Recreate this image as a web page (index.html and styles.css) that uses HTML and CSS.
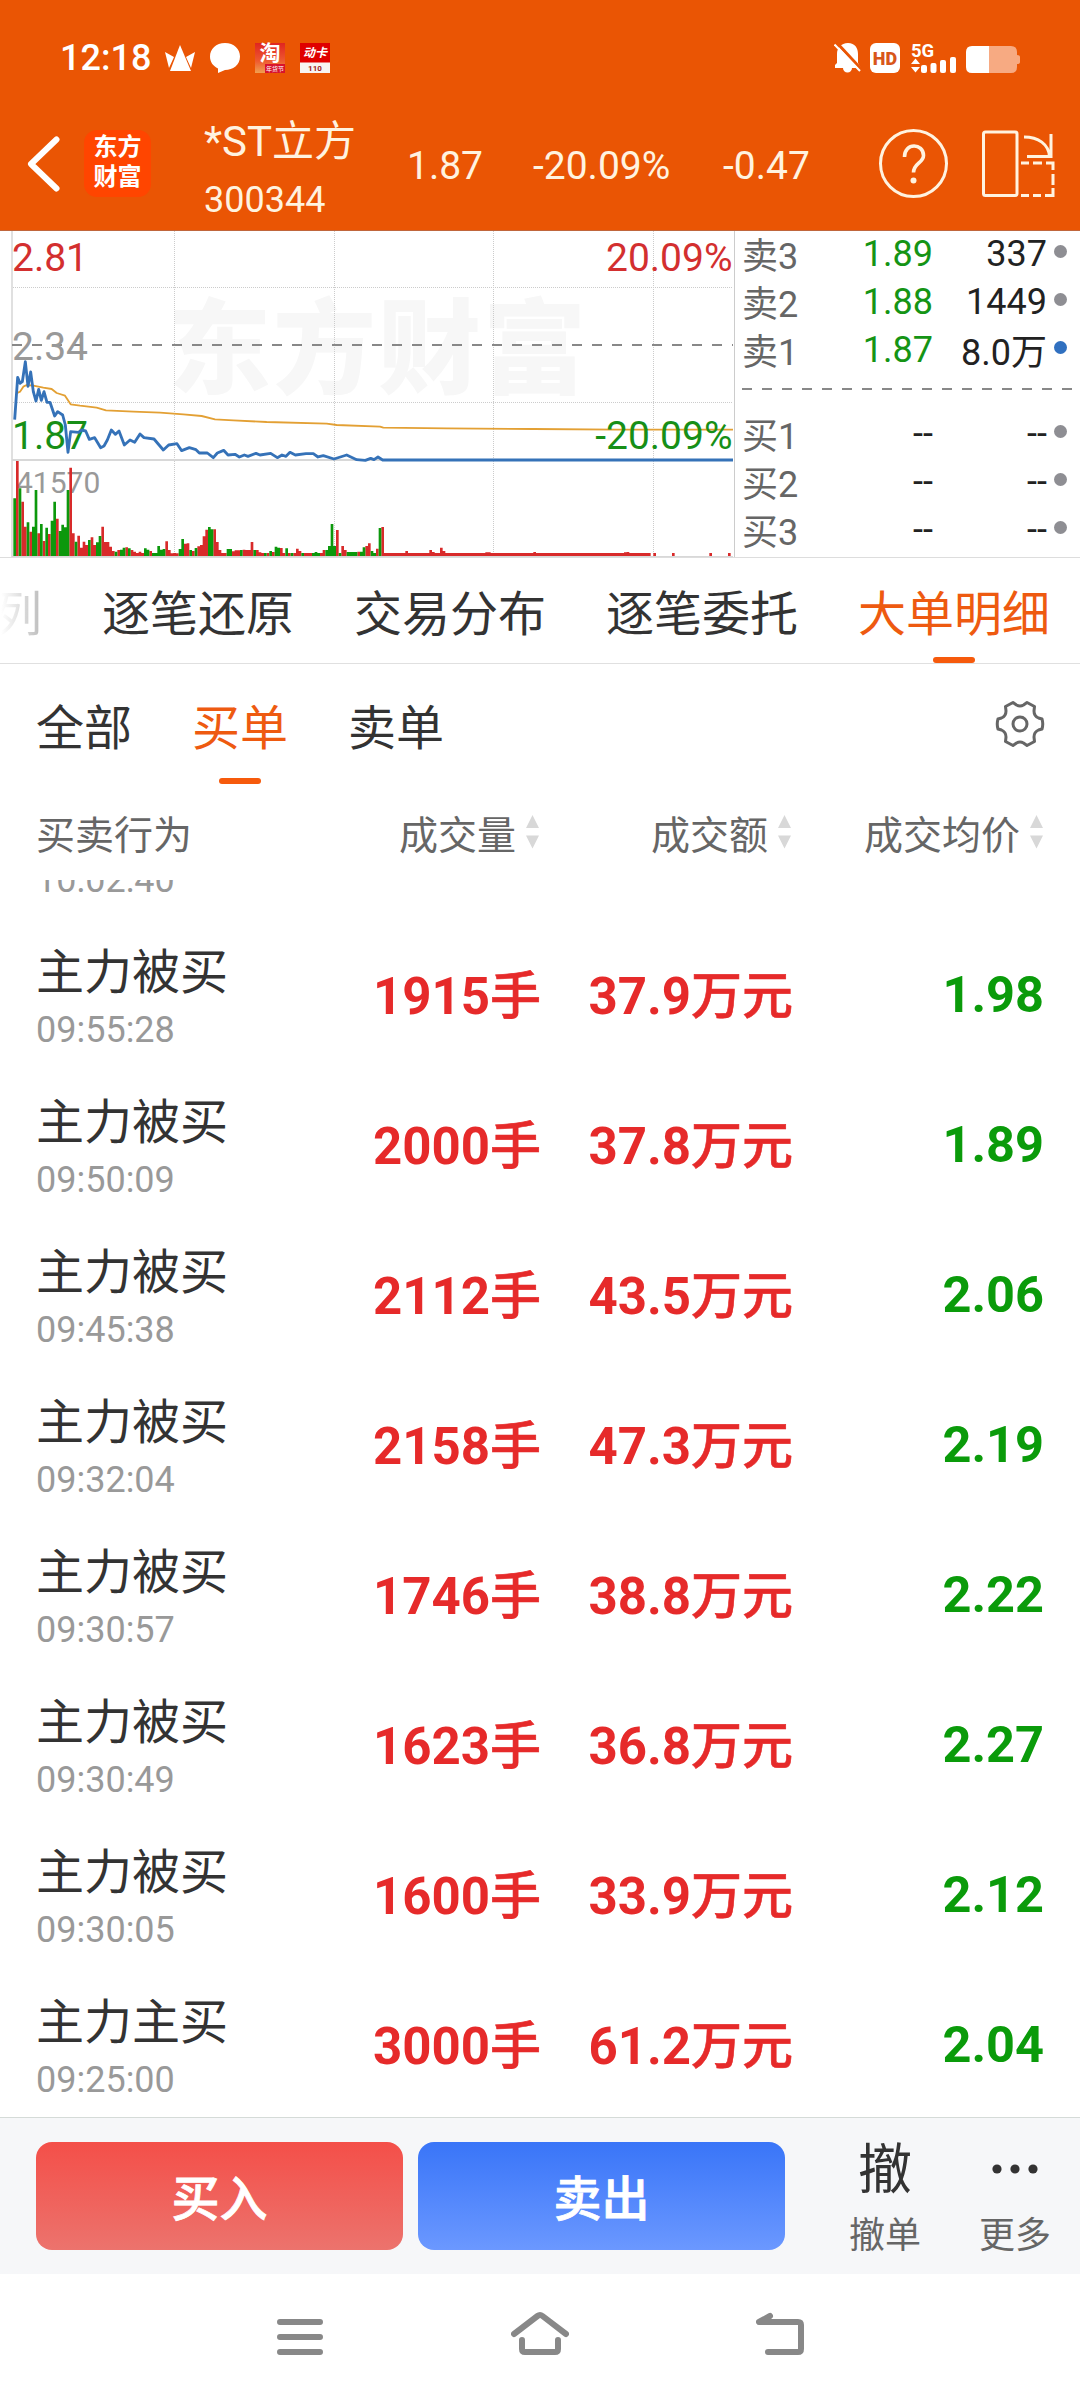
FILE: index.html
```html
<!DOCTYPE html>
<html lang="zh-CN">
<head>
<meta charset="utf-8">
<title>*ST立方 300344</title>
<link rel="stylesheet" href="styles.css">
</head>
<body>
<header class="top">
  <div class="status">
    <div class="status-left">
      <span class="clock">12:18</span>
      <svg width="30" height="30" viewBox="0 0 30 30" fill="#fff"><path d="M15 2 26 28H5Z"/><path d="M0 9 9 14 4 25ZM30 9 21 14 26 25Z"/></svg>
      <svg width="30" height="30" viewBox="0 0 30 30" fill="#fff"><path d="M15 0C24 0 30 6 30 13.500C30 22 23 27 15 27L8 30V25.500C3 23 0 19 0 13.500C0 6 6 0 15 0Z"/></svg>
      <span class="app app-tao"><b>淘</b><i>年货节</i></span>
      <span class="app app-card"><b>动卡</b><i>110</i></span>
    </div>
    <div class="status-right">
      <svg width="28" height="30" viewBox="0 0 28 30"><path d="M14 0C21 0 24 5 24 11V20L27 25H18A4.500 4.500 0 0 1 9 25H1V22L3 20V11C3 5 7 0 14 0Z" fill="#fff"/><path d="M3 0 28 27" stroke="#ea5504" stroke-width="3"/><path d="M.5 1.500 26 28" stroke="#fff" stroke-width="2"/></svg>
      <span class="hd">HD</span>
      <svg class="signal" width="46" height="30" viewBox="0 0 46 30" fill="#fff"><text x="0" y="14" class="net">5G</text><path d="M0 21 4.500 15.500 9 21ZM0 24H9L4.500 29.500Z"/><rect x="10" y="22" width="6" height="8" rx="2"/><rect x="19.500" y="20" width="6" height="10" rx="2"/><rect x="29" y="17" width="6" height="13" rx="2"/><rect x="39" y="14" width="6" height="16" rx="2"/></svg>
      <svg width="54" height="30" viewBox="0 0 54 30"><path d="M23 3H45Q51 3 51 9V12Q54 12 54 14V19Q54 21 51 21V24Q51 30 45 30H23Z" fill="#f7aa82"/><path d="M6 3H23V30H6Q0 30 0 24V9Q0 3 6 3Z" fill="#fff"/></svg>
    </div>
  </div>
  <div class="quote">
    <svg class="back" width="33" height="56" viewBox="0 0 33 56"><path d="M29.500 3.500 4 28 29.500 52.500" fill="none" stroke="#fff" stroke-width="6" stroke-linecap="round" stroke-linejoin="round"/></svg>
    <div class="logo">东方<br>财富</div>
    <div class="stock"><div class="stock-name">*ST立方</div><div class="stock-code">300344</div></div>
    <span class="num">1.87</span><span class="num">-20.09%</span><span class="num">-0.47</span>
    <svg width="70" height="70" viewBox="0 0 70 70"><circle cx="34.500" cy="34.500" r="33" fill="none" stroke="#fff3e0" stroke-width="3"/><path d="M25.500 28C25.500 13 44.500 14 44.500 26.500C44.500 34 34.500 34 34.500 43.500" fill="none" stroke="#fff3e0" stroke-width="3.600"/><circle cx="34.500" cy="51.500" r="3" fill="#fff3e0"/></svg>
    <svg width="73" height="68" viewBox="0 0 73 68" fill="none" stroke="#fff3e0" stroke-width="3"><rect x="1.500" y="2" width="33.500" height="63.500" rx="2"/><path d="M42 7C56 7 67 14 67.500 27M69 4V26.500H45"/><path d="M39 33H47M51 33H60M64 33H71V40M71 44V55M71 58V65.500H63M59 65.500H51M47 65.500H39"/></svg>
  </div>
</header>

<section class="market">
  <svg class="chart" width="736" height="327" viewBox="0 0 736 327">
    <text x="168" y="155" class="watermark">东方财富</text>
    <g stroke="#ccc" stroke-width="1" stroke-dasharray="1 1"><path d="M174.500 0V326M334.500 0V326M493.500 0V326M653.500 0V326M13 56.500H733M13 171.500H733"/></g>
    <path d="M12 0V326" stroke="#e0e0e0" stroke-width="2"/>
    <path d="M12 229H733" stroke="#d8d8d8" stroke-width="2"/>
    <path d="M12 325.500H733" stroke="#d8d8d8"/>
    <path d="M12 114H733" stroke="#888" stroke-width="2" stroke-dasharray="10 10"/>
    <path d="M734.500 0V326" stroke="#ccc"/>
    <text x="12" y="128.500" class="lbl flat">2.34</text>
    <text x="12" y="40" class="lbl up">2.81</text>
    <text x="732.500" y="40" class="lbl up end">20.09%</text>
    <text x="16" y="261.500" class="lbl flat small">41570</text>
    <g transform="translate(0 -6) scale(.33333)" fill="none" stroke-linejoin="round">
      <g id="bars"></g>
      <path stroke="#e3a034" stroke-width="5.500" d="M52 504 60 500 70 485 80 480 100 482 130 488 155 492 170 504 195 512 212 538 240 542 290 548 318 556 400 560 480 563 550 568 605 573 645 583 700 586 800 591 980 596 1010 600 1140 605 1150 608 1340 610 1600 612 1850 614 2199 614"/>
    </g>
    <text x="12" y="218" class="lbl down">1.87</text>
    <text x="732.500" y="218" class="lbl down end">-20.09%</text>
    <path transform="translate(0 -6) scale(.33333)" fill="none" stroke="#3572b8" stroke-width="8.500" stroke-linejoin="round" d="M44 584 53 457 60 475 67 470 76 410 84 484 92 441 100 500 108 528 116 493 124 526 132 500 141 532 150 532 164 573 173 560 188 570 196 600 204 682 212 620 236 622 244 615 257 618 268 643 284 638 302 668 312 663 322 645 334 615 346 628 357 618 373 660 390 645 404 652 420 627 432 638 462 642 490 675 506 660 531 656 545 677 568 668 588 674 598 684 622 684 640 698 652 684 671 676 684 690 705 688 718 696 733 690 744 694 768 685 780 690 812 685 832 698 846 690 858 694 870 682 886 690 918 686 940 686 954 696 970 692 1002 702 1040 690 1070 704 1096 706 1112 700 1122 704 1134 696 1148 705 2199 705"/>
  </svg>
  <div class="book">
    <div class="level"><span class="side">卖3</span><span class="price down">1.89</span><span class="vol">337</span><i class="dot"></i></div>
    <div class="level"><span class="side">卖2</span><span class="price down">1.88</span><span class="vol">1449</span><i class="dot"></i></div>
    <div class="level"><span class="side">卖1</span><span class="price down">1.87</span><span class="vol vol-cjk">8.0万</span><i class="dot dot-blue"></i></div>
    <div class="split"></div>
    <div class="level"><span class="side">买1</span><span class="price">--</span><span class="vol">--</span><i class="dot"></i></div>
    <div class="level"><span class="side">买2</span><span class="price">--</span><span class="vol">--</span><i class="dot"></i></div>
    <div class="level"><span class="side">买3</span><span class="price">--</span><span class="vol">--</span><i class="dot"></i></div>
  </div>
</section>

<nav class="tabs">
  <span class="tab faded">列</span><span class="tab">逐笔还原</span><span class="tab">交易分布</span><span class="tab">逐笔委托</span><span class="tab active">大单明细</span>
</nav>
<div class="filters">
  <span class="filter">全部</span><span class="filter active">买单</span><span class="filter">卖单</span>
  <svg class="gear" width="50" height="48" viewBox="0 0 50 48" fill="none" stroke="#666" stroke-width="3" stroke-linejoin="round"><path d="M18 2.500 21.500 5Q25 7 28.500 5L32 2.500 39.500 6.500 39 11Q39 16 43.500 18L47 19Q48.500 24 47 29L43.500 30Q39 32 39 37L39.500 41.500 32 45.500 28.500 43Q25 41 21.500 43L18 45.500 10.500 41.500 11 37Q11 32 6.500 30L3 29Q1.500 24 3 19L6.500 18Q11 16 11 11L10.500 6.500Z"/><circle cx="25" cy="24" r="7"/></svg>
</div>
<div class="cols head">
  <span>买卖行为</span>
  <span class="sort">成交量<svg width="13" height="34" viewBox="0 0 13 34"><path d="M6.500 0 13 13H0ZM0 20.500H13L6.500 33.500Z"/></svg></span>
  <span class="sort">成交额<svg width="13" height="34" viewBox="0 0 13 34"><path d="M6.500 0 13 13H0ZM0 20.500H13L6.500 33.500Z"/></svg></span>
  <span class="sort">成交均价<svg width="13" height="34" viewBox="0 0 13 34"><path d="M6.500 0 13 13H0ZM0 20.500H13L6.500 33.500Z"/></svg></span>
</div>
<main class="list">
  <div class="cols row first"><div class="act"><span class="time">10:02:40</span></div></div>
  <div class="cols row"><div class="act">主力被买<span class="time">09:55:28</span></div><b class="big">1915<em>手</em></b><b class="big">37.9<em>万元</em></b><b class="avg">1.98</b></div>
  <div class="cols row"><div class="act">主力被买<span class="time">09:50:09</span></div><b class="big">2000<em>手</em></b><b class="big">37.8<em>万元</em></b><b class="avg">1.89</b></div>
  <div class="cols row"><div class="act">主力被买<span class="time">09:45:38</span></div><b class="big">2112<em>手</em></b><b class="big">43.5<em>万元</em></b><b class="avg">2.06</b></div>
  <div class="cols row"><div class="act">主力被买<span class="time">09:32:04</span></div><b class="big">2158<em>手</em></b><b class="big">47.3<em>万元</em></b><b class="avg">2.19</b></div>
  <div class="cols row"><div class="act">主力被买<span class="time">09:30:57</span></div><b class="big">1746<em>手</em></b><b class="big">38.8<em>万元</em></b><b class="avg">2.22</b></div>
  <div class="cols row"><div class="act">主力被买<span class="time">09:30:49</span></div><b class="big">1623<em>手</em></b><b class="big">36.8<em>万元</em></b><b class="avg">2.27</b></div>
  <div class="cols row"><div class="act">主力被买<span class="time">09:30:05</span></div><b class="big">1600<em>手</em></b><b class="big">33.9<em>万元</em></b><b class="avg">2.12</b></div>
  <div class="cols row"><div class="act">主力主买<span class="time">09:25:00</span></div><b class="big">3000<em>手</em></b><b class="big">61.2<em>万元</em></b><b class="avg">2.04</b></div>
</main>
<footer class="trade">
  <button class="btn buy">买入</button>
  <button class="btn sell">卖出</button>
  <div class="tool"><span class="glyph word">撤</span><span>撤单</span></div>
  <div class="tool"><span class="glyph"><svg width="46" height="10" viewBox="0 0 46 10" fill="#333"><circle cx="5" cy="5" r="4.600"/><circle cx="23" cy="5" r="4.600"/><circle cx="41" cy="5" r="4.600"/></svg></span><span>更多</span></div>
</footer>
<div class="sysnav">
  <svg width="46" height="48" viewBox="0 0 46 48"><path d="M3 14H43M3 29H43M3 44H43"/></svg>
  <svg width="58" height="48" viewBox="0 0 58 48"><path d="M3 26 26.500 8Q29 6 31.500 8L55 26M11 32V41Q11 44 14 44H44Q47 44 47 41V32"/></svg>
  <svg width="48" height="48" viewBox="0 0 48 48"><path d="M14 8 3 14H42Q45 14 45 17V41Q45 44 42 44H12"/></svg>
</div>
<script src="chart.js"></script>
</body>
</html>
```
FILE: styles.css
```css
* { box-sizing: border-box; }
body { margin: 0; width: 1080px; height: 2400px; overflow: hidden; background: #fff; color: #333; font-family: Roboto, "Noto Sans CJK SC", sans-serif; }
svg { display: block; flex: none; }
.top { height: 231px; background: #ea5504; border-bottom: 1px solid #c0663c; color: #fff3e0; }
.status { height: 116px; padding: 0 60px; display: flex; justify-content: space-between; align-items: center; color: #fff; }
.status-left { display: flex; align-items: center; gap: 15px; }
.clock { width: 90px; font-size: 36px; font-weight: 500; line-height: 40px; }
.app { width: 30px; height: 30px; display: flex; flex-direction: column; align-items: center; white-space: nowrap; }
.app b { font-weight: 700; }
.app i { font-style: normal; }
.app-tao { background: linear-gradient(#e02520, #ee5a30 60%, #f0a050); }
.app-tao b { font-size: 21px; line-height: 21px; }
.app-tao i { width: 20px; align-self: flex-end; background: #d8122c; font-size: 6px; line-height: 9px; text-align: center; }
.app-card { background: linear-gradient(#e00000 19px, #f8f4f2 20px); }
.app-card b { font-size: 12px; line-height: 21px; font-style: italic; }
.app-card i { font-size: 8px; line-height: 9px; color: #a01818; font-weight: 700; }
.status-right { display: flex; align-items: center; }
.hd { width: 30px; height: 30px; margin-left: 8px; border-radius: 6px; background: #fff; color: #d8561a; font-size: 18px; font-weight: 900; line-height: 31px; text-align: center; }
.signal { margin: 0 9px 0 11px; overflow: visible; }
.net { font-size: 18.500px; font-weight: 700; }
.quote { height: 95px; display: grid; grid-template-columns: 84px 119px 204px 126px 190px 156px 103px 98px; grid-template-rows: 95px; align-items: center; }
.back { margin-left: 27px; }
.logo { width: 67px; height: 67px; padding-top: 2px; border-radius: 13px; background: #ff4500; color: #fff; font-size: 24px; font-weight: 700; line-height: 30px; text-align: center; }
.stock { margin-top: 14px; padding-left: 1px; }
.stock-name { font-size: 42px; line-height: 50px; }
.stock-code { margin-top: 8px; font-size: 36px; line-height: 50px; }
.num { margin-top: 4px; font-size: 39px; line-height: 50px; }

.market { height: 327px; display: flex; border-bottom: 1px solid #ddd; }
.chart { overflow: hidden; }
.lbl { font-size: 39px; }
.lbl.small { font-size: 30px; }
.end { text-anchor: end; }
.up { fill: #d32f2f; }
.flat { fill: #999; }
.lbl.down { fill: #178f17; }
.watermark { font-family: "Noto Sans CJK SC"; font-size: 103px; font-weight: 900; letter-spacing: 2px; fill: #f7f7f7; }
.book { width: 344px; padding-left: 6px; font-size: 36px; line-height: 42px; color: #222; }
.level { height: 48px; display: grid; grid-template-columns: 60px 131px 114px 13px; align-items: center; }
.side { padding-top: 3px; color: #666; }
.price { padding-bottom: 3px; text-align: right; }
.price.down { color: #159415; }
.vol { padding-bottom: 3px; text-align: right; }
.vol-cjk { padding: 3px 0 0; }
.dot { width: 13px; height: 13px; margin: 0 0 8px 7px; border-radius: 50%; background: #8e8e93; }
.dot-blue { background: #3070c0; }
.split { height: 36px; margin-right: 7px; background: repeating-linear-gradient(90deg, #888 0 10px, transparent 10px 20px) 0 13px / 100% 2px no-repeat; }

.tabs { height: 106px; padding-top: 9px; border-bottom: 1px solid #e0e0e0; display: flex; gap: 60px; font-size: 48px; line-height: 96px; white-space: nowrap; }
.tab { height: 96px; display: flex; flex-direction: column; align-items: center; }
.tab.faded { width: 48px; margin-left: -6px; background: linear-gradient(90deg, #fff 15%, #bbb); -webkit-background-clip: text; background-clip: text; color: transparent; }
.active { color: #ee5a10; }
.active::after { content: ""; width: 42px; height: 6px; border-radius: 3px; background: #f65a0c; }
.tab.active::after { margin-top: -6px; }
.filters { height: 120px; padding: 0 36px 0; display: flex; gap: 60px; font-size: 48px; line-height: 130px; }
.filter { height: 120px; display: flex; flex-direction: column; align-items: center; }
.filter.active::after { margin-top: -16px; }
.gear { margin: 36px -1px 0 auto; }
.cols { display: grid; grid-template-columns: 252px 252px 252px 252px; padding-left: 36px; }
.head { height: 96px; font-size: 39px; line-height: 104px; color: #666; }
.sort { padding-right: 1px; display: flex; justify-content: flex-end; gap: 10px; white-space: nowrap; }
.sort svg { margin-top: 31px; fill: #d8d8d8; }
.list { height: 1237px; overflow: hidden; }
.row { height: 150px; }
.row.first { margin-top: -125px; }
.first .act { padding-top: 98px; }
.act { padding-top: 38px; font-size: 48px; line-height: 60px; white-space: nowrap; }
.time { display: block; margin-top: 3px; font-size: 36px; line-height: 48px; color: #999; }
.big, .avg { padding-top: 62px; font-size: 51px; line-height: 60px; text-align: right; white-space: nowrap; color: #e62a2a; }
.big { margin-right: -1px; }
.big em { font-style: normal; font-weight: 500; -webkit-text-stroke: .6px #e62a2a; }
.avg { padding-top: 60px; font-size: 50.500px; color: #0a9b0a; }

.trade { height: 157px; padding: 24px 0 0 36px; border-top: 1px solid #d5dbd8; background: #f6f7f9; display: flex; }
.btn { width: 367px; height: 108px; margin: 0 15px 0 0; padding: 7px 0 0; border: 0; border-radius: 16px; color: #fff; font: 500 48px/100px Roboto, "Noto Sans CJK SC", sans-serif; -webkit-text-stroke: .8px #fff; }
.buy { background: linear-gradient(#f44f49, #ec736d); }
.sell { background: linear-gradient(#3975f8, #6b98ff); }
.tool { width: 130px; margin-left: 20px; display: flex; flex-direction: column; align-items: center; font-size: 36px; line-height: 40px; color: #666; }
.tool + .tool { margin-left: 0; }
.glyph { height: 74px; display: flex; align-items: center; font-size: 54px; line-height: 54px; color: #333; padding-bottom: 20px; }
.glyph.word { padding-bottom: 16px; }
.sysnav { height: 126px; padding: 34px 276px 0 277px; display: flex; justify-content: space-between; }
.sysnav path { fill: none; stroke: #888; stroke-width: 6; stroke-linecap: round; stroke-linejoin: round; }
```
FILE: chart.js
```js
// Volume per minute: colour letter followed by the bar height in third-pixels.
const bars = ("g173 r285 g203 r163 r88 g101 r73 g88 g198 r68 g96 r45 g85 r66 g106 g163 r112 g75 g94 g86 g198 r265 r68 g43 r61 r25 r43 r33 g48 r56 r33 g41 g60 r88 r42 r42 r28 r15 g13 r18 g19 g25 r26 g23 r18 r13 r9 r13 r9 g23 g19 r15 g9 g9 g30 g19 g21 r44 r18 r8 r9 r8 g21 g51 r37 r38 g18 r15 g24 r29 r33 r59 r79 g87 g80 r80 r42 r18 r9 r9 g21 g21 r14 r17 r17 g18 r19 r18 r18 r42 g18 r18 r11 r9 g9 r9 g15 r12 g28 g25 r24 r9 g23 r9 g9 r9 r22 r15 g9 r9 r9 r9 g9 g12 g9 r9 r18 g18 g30 g96 g30 r78 g9 r30 r18 g12 g12 g12 g12 r13 g13 g26 r30 r38 g15 g9 r22 g84 r87").split(" ");
for (let i = bars.length; i < 239; i++) bars.push("r9");
for (const [i, h] of [[147, 15], [156, 18], [157, 12], [160, 25], [161, 15], [177, 11], [178, 11], [195, 12], [229, 11], [230, 12]]) bars[i] = "r" + h;
for (const i of [240, 247, 261, 268]) bars[i] = "r9";
let up = "", down = "";
bars.forEach((b, i) => {
  const bar = `M${44 + 8 * i} 993v-${b.slice(1)}`;
  if (b[0] === "r") up += bar; else down += bar;
});
document.getElementById("bars").innerHTML =
  `<path d="${up}" stroke="#d82a2a" stroke-width="8"/><path d="${down}" stroke="#0c980c" stroke-width="8"/>`;
```
